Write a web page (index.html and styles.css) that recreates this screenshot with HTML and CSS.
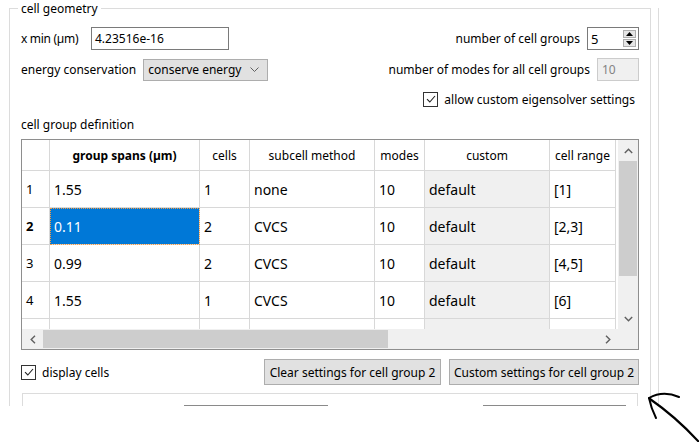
FILE: index.html
```html
<!DOCTYPE html>
<html lang="en">
<head>
<meta charset="utf-8">
<title>cell geometry</title>
<link rel="stylesheet" href="styles.css">
</head>
<body>
<div class="screen">
  <fieldset class="group">
    <legend class="group-title">cell geometry</legend>

    <div class="form-row">
      <div class="field">
        <span class="lbl lbl-xmin">x min (µm)</span>
        <div class="lineedit">4.23516e-16</div>
      </div>
      <div class="field field-right">
        <span class="lbl">number of cell groups</span>
        <div class="spinbox">
          <span class="spin-value">5</span>
          <div class="spin-btns">
            <span class="spin-btn"><svg width="7" height="4" viewBox="0 0 7 4"><polygon points="0,4 3.5,0 7,4" fill="#000"/></svg></span>
            <span class="spin-btn"><svg width="7" height="4" viewBox="0 0 7 4"><polygon points="0,0 7,0 3.5,4" fill="#000"/></svg></span>
          </div>
        </div>
      </div>
    </div>

    <div class="form-row row-b">
      <div class="field field-right">
        <span class="lbl">energy conservation</span>
        <div class="combo">
          <span>conserve energy</span>
          <svg class="combo-arrow" width="9" height="5" viewBox="0 0 9 5"><polyline points="0.5,0.5 4.5,4.5 8.5,0.5" fill="none" stroke="#606060" stroke-width="1"/></svg>
        </div>
      </div>
      <div class="field field-right">
        <span class="lbl">number of modes for all cell groups</span>
        <div class="disabled-box">10</div>
      </div>
    </div>

    <div class="form-row row-c">
      <span class="check"><svg width="12" height="12" viewBox="0 0 12 12"><polyline points="2,6.2 4.8,9 10,3" fill="none" stroke="#222" stroke-width="1.1"/></svg></span>
      <span class="check-label">allow custom eigensolver settings</span>
    </div>

    <div class="section-label">cell group definition</div>

    <div class="table-frame">
      <div class="viewport">
        <div class="grid">
          <div class="hc"></div>
          <div class="hc hc-bold">group spans (µm)</div>
          <div class="hc">cells</div>
          <div class="hc">subcell method</div>
          <div class="hc">modes</div>
          <div class="hc">custom</div>
          <div class="hc">cell range</div>

          <div class="rh">1</div>
          <div class="c">1.55</div>
          <div class="c">1</div>
          <div class="c">none</div>
          <div class="c">10</div>
          <div class="c ro">default</div>
          <div class="c">[1]</div>

          <div class="rh rh-cur">2</div>
          <div class="c sel">0.11</div>
          <div class="c">2</div>
          <div class="c">CVCS</div>
          <div class="c">10</div>
          <div class="c ro">default</div>
          <div class="c">[2,3]</div>

          <div class="rh">3</div>
          <div class="c">0.99</div>
          <div class="c">2</div>
          <div class="c">CVCS</div>
          <div class="c">10</div>
          <div class="c ro">default</div>
          <div class="c">[4,5]</div>

          <div class="rh">4</div>
          <div class="c">1.55</div>
          <div class="c">1</div>
          <div class="c">CVCS</div>
          <div class="c">10</div>
          <div class="c ro">default</div>
          <div class="c">[6]</div>

          <div class="rh"></div>
          <div class="c"></div>
          <div class="c"></div>
          <div class="c"></div>
          <div class="c"></div>
          <div class="c ro"></div>
          <div class="c"></div>
        </div>
      </div>
      <div class="vscroll">
        <span class="sb-btn sb-btn-top"><svg width="9" height="6" viewBox="0 0 9 6"><polyline points="0.8,5 4.5,1.2 8.2,5" fill="none" stroke="#606060" stroke-width="1.4"/></svg></span>
        <span class="vthumb"></span>
        <span class="sb-track"></span>
        <span class="sb-btn sb-btn-bottom"><svg width="9" height="6" viewBox="0 0 9 6"><polyline points="0.8,1 4.5,4.8 8.2,1" fill="none" stroke="#606060" stroke-width="1.4"/></svg></span>
      </div>
      <div class="hscroll">
        <span class="sb-btn sb-btn-left"><svg width="6" height="9" viewBox="0 0 6 9"><polyline points="5,0.8 1.2,4.5 5,8.2" fill="none" stroke="#606060" stroke-width="1.4"/></svg></span>
        <span class="hthumb"></span>
        <span class="sb-track"></span>
        <span class="sb-btn sb-btn-right"><svg width="6" height="9" viewBox="0 0 6 9"><polyline points="1,0.8 4.8,4.5 1,8.2" fill="none" stroke="#606060" stroke-width="1.4"/></svg></span>
      </div>
      <div class="scroll-corner"></div>
    </div>

    <div class="bottom-row">
      <span class="check"><svg width="12" height="12" viewBox="0 0 12 12"><polyline points="2,6.2 4.8,9 10,3" fill="none" stroke="#222" stroke-width="1.1"/></svg></span>
      <span class="check-label">display cells</span>
      <button class="btn btn-clear">Clear settings for cell group 2</button>
      <button class="btn btn-custom">Custom settings for cell group 2</button>
    </div>

    <div class="inner-group">
      <button class="btn btn-low btn-low-1"></button>
      <button class="btn btn-low btn-low-2"></button>
    </div>
  </fieldset>
  <div class="side"></div>
</div>

<svg class="scribble" width="699" height="442" viewBox="0 0 699 442">
  <path d="M679,397 Q663,390 649,398" fill="none" stroke="#000" stroke-width="2" stroke-linecap="round"/>
  <path d="M649,398 Q651,408 656,418" fill="none" stroke="#000" stroke-width="2" stroke-linecap="round"/>
  <path d="M650,399 Q676,417 699,442" fill="none" stroke="#000" stroke-width="2.2" stroke-linecap="round"/>
</svg>
</body>
</html>
```

FILE: styles.css
```css
* { box-sizing: border-box; }

html, body {
  margin: 0;
  padding: 0;
  background: #fff;
}

body {
  width: 699px;
  height: 442px;
  position: relative;
  overflow: hidden;
  font-family: "Noto Sans", "DejaVu Sans", sans-serif;
  font-size: 12px;
  color: #000;
}

.screen {
  height: 406px;
  overflow: hidden;
  display: flex;
  padding-left: 9px;
}

.group {
  flex: none;
  width: 642px;
  min-height: 520px;
  margin: 0;
  border: 1px solid #dcdcdc;
  padding: 10px 11px 0 11px;
}

.group-title {
  padding: 0 3px;
  margin-left: -3px;
  line-height: 17px;
}

.side {
  flex: 1;
  margin-left: 7px;
  margin-top: 8px;
  border-left: 1px solid #dcdcdc;
}

/* form rows */
.form-row {
  display: flex;
  justify-content: space-between;
  align-items: center;
  height: 23px;
}

.row-b { margin-top: 8px; }

.row-c {
  margin-top: 9px;
  height: 18px;
  justify-content: flex-end;
  padding-right: 4px;
}

.field {
  display: flex;
  align-items: center;
  gap: 6px;
}

.field-right { gap: 7px; }

.lbl { white-space: nowrap; }

.lbl-xmin {
  width: 64px;
  letter-spacing: -0.3px;
}

.lineedit {
  width: 138px;
  height: 23px;
  border: 1px solid #7a7a7a;
  padding-left: 3px;
  line-height: 21px;
  background: #fff;
}

.combo {
  width: 125px;
  height: 22px;
  border: 1px solid #adadad;
  background: #e1e1e1;
  display: flex;
  align-items: center;
  justify-content: space-between;
  padding: 0 8px 0 4px;
}

.combo-arrow { display: block; }

.spinbox {
  width: 52px;
  height: 23px;
  border: 1px solid #7a7a7a;
  background: #fff;
  display: flex;
  align-items: center;
  padding: 0 2px 0 3px;
}

.spin-value { flex: 1; font-size: 13px; }

.spin-btns {
  display: flex;
  flex-direction: column;
  gap: 1px;
}

.spin-btn {
  width: 13px;
  height: 8px;
  border: 1px solid #adadad;
  background: #e5e5e5;
  display: flex;
  align-items: center;
  justify-content: center;
}

.spin-btn svg { display: block; }

.disabled-box {
  width: 42px;
  height: 23px;
  border: 1px solid #cccccc;
  background: #f0f0f0;
  color: #838383;
  padding-left: 4px;
  line-height: 21px;
}

.check {
  width: 15px;
  height: 15px;
  border: 1px solid #333;
  background: #fff;
  display: flex;
  align-items: center;
  justify-content: center;
  flex: none;
}

.check svg { display: block; }

.check-label {
  margin-left: 6px;
  white-space: nowrap;
}

.section-label {
  margin-top: 9px;
  line-height: 16px;
}

/* table */
.table-frame {
  margin-top: 6px;
  width: 618px;
  height: 211px;
  border: 1px solid #8e8e8e;
  display: grid;
  grid-template-columns: 596px 20px;
  grid-template-rows: 189px 20px;
}

.viewport {
  overflow: hidden;
  background: #fff;
}

.grid {
  display: grid;
  grid-template-columns: 28px 150px 50px 125px 50px 125px 66px;
  grid-template-rows: 31px repeat(5, 37px);
}

.grid > div {
  border-right: 1px solid #d8d8d8;
  border-bottom: 1px solid #d8d8d8;
  display: flex;
  align-items: center;
  white-space: nowrap;
  overflow: hidden;
}

.hc {
  justify-content: center;
  font-size: 12px;
  background: #fff;
}

.hc-bold { font-weight: bold; }

.rh {
  padding-left: 4px;
  font-size: 13px;
}

.rh-cur { font-weight: bold; }

.c {
  padding-left: 4px;
  font-size: 14px;
  padding-top: 1px;
}

.ro { background: #f0f0f0; }

.sel {
  background: #0078d7;
  color: #fff;
  outline: 1px dotted #f29b45;
  outline-offset: -1px;
}

.vscroll {
  display: flex;
  flex-direction: column;
  background: #f0f0f0;
}

.hscroll {
  display: flex;
  background: #f0f0f0;
}

.sb-btn {
  display: flex;
  align-items: center;
  justify-content: center;
  flex: none;
}

.sb-btn svg { display: block; }

.sb-btn-top, .sb-btn-bottom { height: 21px; }
.sb-btn-left, .sb-btn-right { width: 21px; }

.sb-track { flex: 1; }

.vthumb {
  height: 115px;
  background: #cdcdcd;
  margin: 0 1px;
}

.hthumb {
  width: 345px;
  background: #cdcdcd;
  margin: 1px 0;
}

.scroll-corner { background: #f0f0f0; }

/* bottom */
.bottom-row {
  margin-top: 9px;
  height: 26px;
  display: flex;
  align-items: center;
}

.btn {
  font-family: inherit;
  font-size: 12px;
  color: #000;
  height: 26px;
  border: 1px solid #adadad;
  background: #e1e1e1;
  padding: 0;
  text-align: center;
  white-space: nowrap;
}

.btn-clear {
  width: 177px;
  margin-left: auto;
}

.btn-custom {
  width: 190px;
  margin-left: 8px;
}

.inner-group {
  margin: 8px 1px 0 1px;
  height: 60px;
  border: 1px solid #dcdcdc;
  display: flex;
  padding: 11px 0 0 161px;
  gap: 155px;
  align-items: flex-start;
}

.btn-low {
  width: 144px;
  height: 25px;
  border-color: #8a8a8a;
}

.btn-low-2 { width: 143px; }

.scribble {
  position: absolute;
  left: 0;
  top: 0;
  pointer-events: none;
}
```
